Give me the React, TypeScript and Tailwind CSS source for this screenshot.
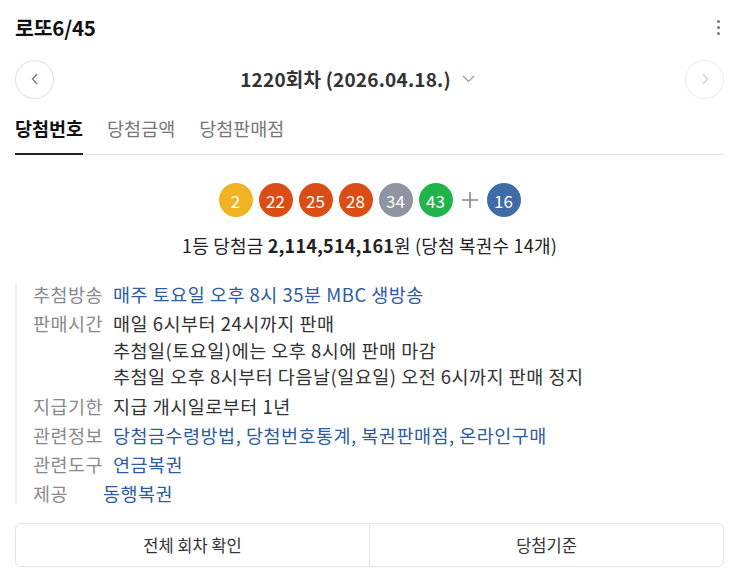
import React from "react";

const FONT = '"Noto Sans CJK KR", "Noto Sans", sans-serif';

function Ball({ n, color }: { n: number; color: string }) {
  return (
    <div
      className={`flex h-[34px] w-[34px] items-center justify-center rounded-full text-[17px] leading-none text-white ${color}`}
    >
      {n}
    </div>
  );
}

function Row({
  label,
  children,
  labelW = "w-[80px]",
}: {
  label: string;
  children: React.ReactNode;
  labelW?: string;
}) {
  return (
    <div className="flex text-[18.5px] leading-[22px] tracking-[0.5px]">
      <div className={`shrink-0 text-[#8a8a8a] ${labelW}`}>{label}</div>
      <div className="flex flex-col gap-[4.5px] text-[#333]">{children}</div>
    </div>
  );
}

export default function App() {
  return (
    <div className="w-[741px] bg-white pl-[15px] pr-[17px]" style={{ fontFamily: FONT }}>
      {/* header */}
      <div className="flex h-[54px] items-center justify-between">
        <div className="text-[20.5px] font-bold tracking-[-0.2px] text-[#111]">로또6/45</div>
        <div className="flex w-[8px] flex-col items-center gap-[3px] pr-[3px]">
          <span className="h-[3px] w-[3px] rounded-full bg-[#777]" />
          <span className="h-[3px] w-[3px] rounded-full bg-[#777]" />
          <span className="h-[3px] w-[3px] rounded-full bg-[#777]" />
        </div>
      </div>

      {/* round nav */}
      <div className="mt-[5px] flex h-[40px] items-center justify-between">
        <button className="flex h-[39px] w-[39px] items-center justify-center rounded-full border border-[#dedede] bg-white">
          <svg width="10" height="12" viewBox="0 0 10 12">
            <path d="M7 1 L2.5 6 L7 11" fill="none" stroke="#777" strokeWidth="1.3" />
          </svg>
        </button>
        <div className="flex items-center gap-[11px] pr-[24px]">
          <span className="text-[19px] font-bold tracking-[0.2px] text-[#333]">1220회차 (2026.04.18.)</span>
          <svg width="13" height="8" viewBox="0 0 13 8">
            <path d="M1 1 L6.5 6.5 L12 1" fill="none" stroke="#999" strokeWidth="1.2" />
          </svg>
        </div>
        <button className="flex h-[39px] w-[39px] items-center justify-center rounded-full border border-[#ebebeb] bg-white">
          <svg width="10" height="12" viewBox="0 0 10 12">
            <path d="M3 1 L7.5 6 L3 11" fill="none" stroke="#d0d0d0" strokeWidth="1.3" />
          </svg>
        </button>
      </div>

      {/* tabs */}
      <div className="mt-[5px] flex gap-[24px] border-b border-[#e6e6e6]">
        <div className="-mb-px border-b-2 border-[#222] pb-[13px] pt-[12px] text-[18.5px] leading-[24px] font-bold text-[#111]">
          당첨번호
        </div>
        <div className="pb-[13px] pt-[12px] text-[18.5px] leading-[24px] text-[#777]">당첨금액</div>
        <div className="pb-[13px] pt-[12px] text-[18.5px] leading-[24px] text-[#777]">당첨판매점</div>
      </div>

      {/* balls */}
      <div className="mt-[28px] flex items-center justify-center gap-[6px]">
        <Ball n={2} color="bg-[#efb324]" />
        <Ball n={22} color="bg-[#da4d14]" />
        <Ball n={25} color="bg-[#da4d14]" />
        <Ball n={28} color="bg-[#da4d14]" />
        <Ball n={34} color="bg-[#8f93a2]" />
        <Ball n={43} color="bg-[#20b44b]" />
        <svg className="mx-[2px]" width="18" height="18" viewBox="0 0 18 18">
          <path d="M9 1 V17 M1 9 H17" stroke="#888" strokeWidth="1.6" />
        </svg>
        <Ball n={16} color="bg-[#3f6ca7]" />
      </div>

      <div className="mt-[17px] text-center text-[18px] leading-[22px] tracking-[0.2px] text-[#222]">
        1등 당첨금 <b className="font-bold">2,114,514,161</b>원 (당첨 복권수 14개)
      </div>

      {/* info */}
      <div className="mt-[27px] flex flex-col gap-[7.3px] border-l-2 border-[#eeeeee] pl-[16px]">
        <Row label="추첨방송">
          <span className="text-[#2f5c9e]">매주 토요일 오후 8시 35분 MBC 생방송</span>
        </Row>
        <Row label="판매시간">
          <span>매일 6시부터 24시까지 판매</span>
          <span>추첨일(토요일)에는 오후 8시에 판매 마감</span>
          <span>추첨일 오후 8시부터 다음날(일요일) 오전 6시까지 판매 정지</span>
        </Row>
        <Row label="지급기한">
          <span>지급 개시일로부터 1년</span>
        </Row>
        <Row label="관련정보">
          <span className="text-[#2f5c9e]">당첨금수령방법, 당첨번호통계, 복권판매점, 온라인구매</span>
        </Row>
        <Row label="관련도구">
          <span className="text-[#2f5c9e]">연금복권</span>
        </Row>
        <Row label="제공" labelW="w-[70px]">
          <span className="text-[#2f5c9e]">동행복권</span>
        </Row>
      </div>

      {/* buttons */}
      <div className="mt-[19px] flex h-[44px] overflow-hidden rounded-[6px] border border-[#e3e3e3]">
        <button className="flex flex-1 items-center justify-center text-[16.5px] text-[#333]">전체 회차 확인</button>
        <div className="w-px bg-[#e6e6e6]" />
        <button className="flex flex-1 items-center justify-center text-[16.5px] text-[#333]">당첨기준</button>
      </div>
      <div className="h-[18px]" />
    </div>
  );
}
